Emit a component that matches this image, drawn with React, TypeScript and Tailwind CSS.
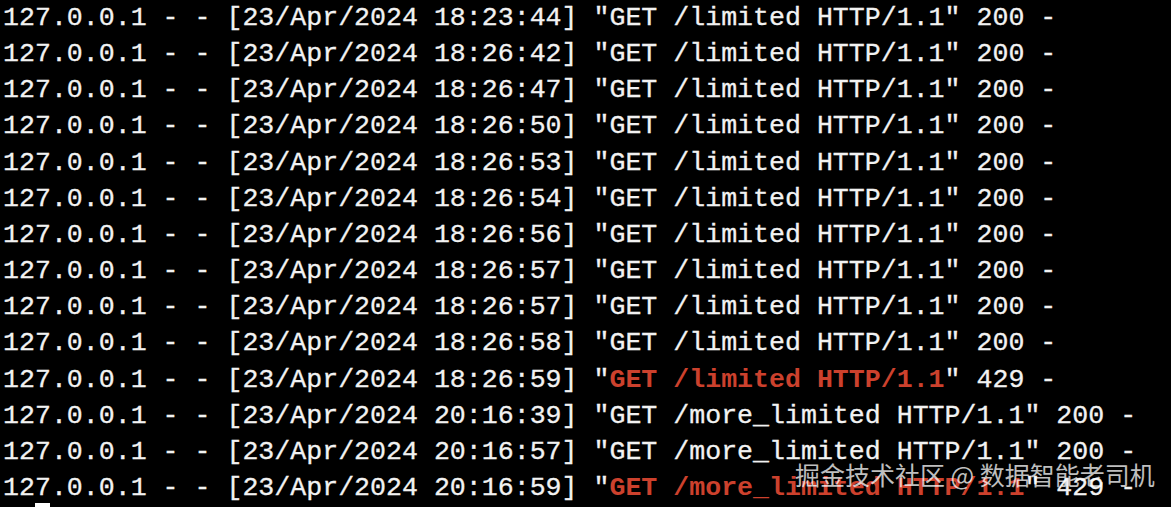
import React from "react";

type Line = {
  time: string;
  path: string;
  status: string;
  blocked?: boolean;
};

const lines: Line[] = [
  { time: "18:23:44", path: "/limited", status: "200" },
  { time: "18:26:42", path: "/limited", status: "200" },
  { time: "18:26:47", path: "/limited", status: "200" },
  { time: "18:26:50", path: "/limited", status: "200" },
  { time: "18:26:53", path: "/limited", status: "200" },
  { time: "18:26:54", path: "/limited", status: "200" },
  { time: "18:26:56", path: "/limited", status: "200" },
  { time: "18:26:57", path: "/limited", status: "200" },
  { time: "18:26:57", path: "/limited", status: "200" },
  { time: "18:26:58", path: "/limited", status: "200" },
  { time: "18:26:59", path: "/limited", status: "429", blocked: true },
  { time: "20:16:39", path: "/more_limited", status: "200" },
  { time: "20:16:57", path: "/more_limited", status: "200" },
  { time: "20:16:59", path: "/more_limited", status: "429", blocked: true },
];

export default function App() {
  return (
    <div className="relative w-[1171px] h-[507px] overflow-hidden bg-black text-[#f2f2f2] font-['Liberation_Mono',monospace]">
      <div className="pl-[3px] text-[26.6px] leading-[36.15px] whitespace-pre [-webkit-text-stroke:0.3px_#f2f2f2]">
        {lines.map((l, i) => (
          <div key={i}>
            {`127.0.0.1 - - [23/Apr/2024 ${l.time}] "`}
            {l.blocked ? (
              <span className="font-bold text-[#cc412d] [-webkit-text-stroke:0px]">{`GET ${l.path} HTTP/1.1`}</span>
            ) : (
              `GET ${l.path} HTTP/1.1`
            )}
            {`" ${l.status} -`}
          </div>
        ))}
        <div>
          {"  "}
          <span className="inline-block w-[15px] h-[30px] bg-white align-top mt-[-3px]" />
        </div>
      </div>

      {/* watermark */}
      <div className="absolute left-[795px] top-[457px] text-[25px] leading-[34px] text-white/75 whitespace-nowrap font-['Noto_Sans_CJK_SC','Noto_Sans',sans-serif]">
        掘金技术社区 @ 数据智能老司机
      </div>
    </div>
  );
}
